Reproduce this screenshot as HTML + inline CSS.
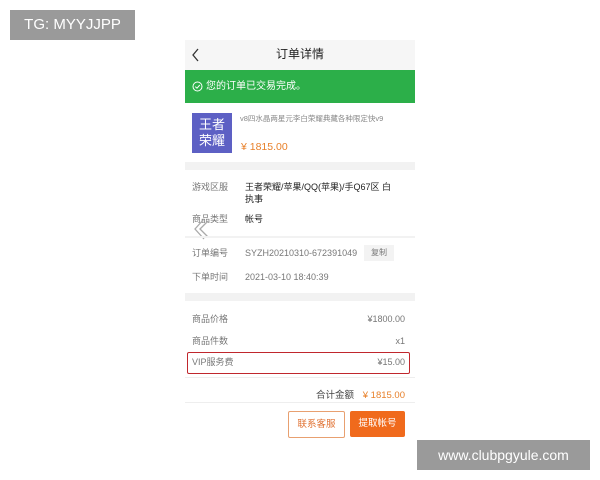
<html><head><style>
body{margin:0;width:600px;height:480px;background:#fff;position:relative;overflow:hidden;font-family:"Liberation Sans","Noto Sans CJK SC",sans-serif;}
.a{position:absolute;line-height:12px;}
.lbl{color:#777;font-size:9px;}
.val{color:#777;font-size:9px;}
</style></head><body>
<div class="a" style="left:10px;top:10px;width:125px;height:30px;background:#9a9a9a;color:#fff;font-size:15px;line-height:30px;text-align:center">TG: MYYJJPP</div>
<div class="a" style="left:185px;top:40px;width:230px;height:30px;background:#f6f6f6"></div>
<svg class="a" style="left:191px;top:48px" width="10" height="14"><path d="M7 1L2 7L7 13" stroke="#333" stroke-width="1.3" fill="none"/></svg>
<div class="a" style="left:185px;top:48px;width:230px;text-align:center;font-size:12px;color:#222">订单详情</div>
<div class="a" style="left:185px;top:70px;width:230px;height:33px;background:#2caf49"></div>
<svg class="a" style="left:192px;top:81px" width="11" height="11"><circle cx="5.5" cy="5.5" r="4.5" stroke="#fff" fill="none"/><path d="M3.3 5.6L5 7.2L7.8 4" stroke="#fff" fill="none"/></svg>
<div class="a" style="left:206px;top:81px;color:#fff;font-size:10px">您的订单已交易完成。</div>
<div class="a" style="left:192px;top:113px;width:40px;height:40px;background:#5d60c4;color:#fff;font-size:13px;line-height:16px;text-align:center;padding-top:4px;box-sizing:border-box">王者<br>荣耀</div>
<div class="a" style="left:240px;top:113px;font-size:7.5px;color:#888">v8四水晶两星元李白荣耀典藏各种限定快v9</div>
<div class="a" style="left:241px;top:141px;font-size:10.5px;color:#e8802a">¥ 1815.00</div>
<div class="a" style="left:185px;top:162px;width:230px;height:8px;background:#f2f2f2"></div>
<div class="a lbl" style="left:192px;top:181px">游戏区服</div>
<div class="a" style="left:245px;top:181px;font-size:9px;color:#222;width:170px;line-height:12px">王者荣耀/苹果/QQ(苹果)/手Q67区 白<br>执事</div>
<div class="a lbl" style="left:192px;top:213px">商品类型</div>
<div class="a" style="left:245px;top:213px;font-size:9px;color:#222">帐号</div>
<svg class="a" style="left:192px;top:217px" width="18" height="24"><path d="M12 2L3 12L12 22M16 4L8 12L16 20" stroke="#aaa" stroke-width="1.3" fill="none"/></svg>
<div class="a" style="left:185px;top:236px;width:230px;height:2px;background:#f2f2f2"></div>
<div class="a lbl" style="left:192px;top:247px">订单编号</div>
<div class="a val" style="left:245px;top:247px">SYZH20210310-672391049</div>
<div class="a" style="left:364px;top:245px;width:30px;height:16px;background:#f3f3f3;font-size:8px;color:#777;text-align:center;line-height:16px">复制</div>
<div class="a lbl" style="left:192px;top:271px">下单时间</div>
<div class="a val" style="left:245px;top:271px">2021-03-10 18:40:39</div>
<div class="a" style="left:185px;top:293px;width:230px;height:8px;background:#f2f2f2"></div>
<div class="a lbl" style="left:192px;top:313px">商品价格</div>
<div class="a val" style="right:195px;top:313px">¥1800.00</div>
<div class="a lbl" style="left:192px;top:335px">商品件数</div>
<div class="a val" style="right:195px;top:335px">x1</div>
<div class="a" style="left:187px;top:352px;width:221px;height:20px;border:1.5px solid #c0272d;border-radius:2px"></div>
<div class="a lbl" style="left:192px;top:356px">VIP服务费</div>
<div class="a val" style="right:195px;top:356px">¥15.00</div>
<div class="a" style="left:185px;top:377px;width:230px;height:1px;background:#eee"></div>
<div class="a" style="left:316px;top:390px;font-size:9.5px;color:#444">合计金额</div>
<div class="a" style="right:195px;top:390px;font-size:9.5px;color:#e8802a">¥ 1815.00</div>
<div class="a" style="left:185px;top:402px;width:230px;height:1px;background:#eee"></div>
<div class="a" style="left:288px;top:411px;width:55px;height:25px;border:1px solid #e8a070;border-radius:2px;color:#e07030;font-size:9.5px;text-align:center;line-height:25px">联系客服</div>
<div class="a" style="left:350px;top:411px;width:55px;height:26px;background:#f06a1c;border-radius:2px;color:#fff;font-size:9.5px;text-align:center;line-height:26px">提取帐号</div>
<div class="a" style="left:417px;top:440px;width:173px;height:30px;background:#9a9a9a;color:#fff;font-size:14px;line-height:30px;text-align:center">www.clubpgyule.com</div>
</body></html>
